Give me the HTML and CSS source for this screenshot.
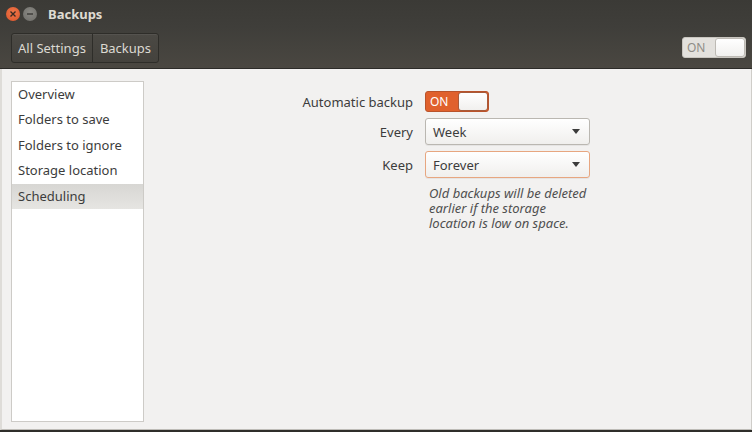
FILE: index.html
```html
<!DOCTYPE html>
<html lang="en">
<head>
	<meta charset="UTF-8">
	<title>Backups</title>
	<link rel="stylesheet" href="styles.css">
</head>
<body>

	<div class="window">
		<div class="titlebar">
			<span class="wbtn close">
				<svg width="8" height="8" viewBox="0 0 8 8"><path d="M1.5 1.5 L6.5 6.5 M6.5 1.5 L1.5 6.5" stroke="#3a2a22" stroke-width="1.4"/></svg>
			</span>
			<span class="wbtn minimize">
				<svg width="8" height="8" viewBox="0 0 8 8"><path d="M1 4 H7" stroke="#3a3936" stroke-width="1.4"/></svg>
			</span>
			<span class="title">Backups</span>
		</div>

		<div class="toolbar">
			<div class="crumbs">
				<span class="crumb">All Settings</span>
				<span class="crumb">Backups</span>
			</div>
			<div class="switch switch-off">
				<span class="switch-label">ON</span>
				<span class="switch-knob"></span>
			</div>
		</div>

		<div class="content">
			<ul class="sidebar">
				<li>Overview</li>
				<li>Folders to save</li>
				<li>Folders to ignore</li>
				<li>Storage location</li>
				<li class="selected">Scheduling</li>
			</ul>

			<div class="form">
				<label>Automatic backup</label>
				<div class="switch switch-on">
					<span class="switch-label">ON</span>
					<span class="switch-knob"></span>
				</div>

				<label>Every</label>
				<div class="combo">Week <span class="arrow"></span></div>

				<label>Keep</label>
				<div class="combo focused">Forever <span class="arrow"></span></div>

				<span></span>
				<p class="hint">Old backups will be deleted earlier if the storage location is low on space.</p>
			</div>
		</div>
	</div>

</body>
</html>
```

FILE: styles.css
```css
body {
	margin: 0;
	width: 752px;
	height: 432px;
	overflow: hidden;
	font-family: "Noto Sans", "Open Sans", sans-serif;
	font-size: 13px;
	background: #2f2e2a;
}

.window {
	display: flex;
	flex-direction: column;
	height: 430px;
}

.titlebar {
	height: 27px;
	display: flex;
	align-items: center;
	padding-left: 6px;
	background: linear-gradient(#3b3a36, #3f3e3a);
}

.wbtn {
	width: 14px;
	height: 14px;
	border-radius: 50%;
	display: flex;
	align-items: center;
	justify-content: center;
	margin-right: 3px;
}

.close {
	background: radial-gradient(circle at 50% 40%, #f0774a, #d9542a);
}

.minimize {
	background: radial-gradient(circle at 50% 40%, #8a8984, #6d6c68);
}

.title {
	color: #dfdbd2;
	font-weight: bold;
	margin-left: 8px;
	font-size: 13px;
}

.toolbar {
	height: 41px;
	display: flex;
	align-items: center;
	justify-content: space-between;
	padding: 0 6px 0 11px;
	background: linear-gradient(#3f3e3a, #4a4741);
	border-bottom: 1px solid #2c2b28;
}

.crumbs {
	display: flex;
	height: 28px;
	border: 1px solid #2e2d29;
	border-radius: 3px;
	background: linear-gradient(#4b4944, #44423d);
	box-shadow: inset 0 1px 0 rgba(255,255,255,0.06);
}

.crumb {
	color: #dcd9d2;
	display: flex;
	align-items: center;
	padding: 0 6px;
}

.crumb + .crumb {
	border-left: 1px solid #2e2d29;
	padding: 0 7px;
}

.switch {
	width: 62px;
	height: 19px;
	border-radius: 3px;
	display: flex;
	overflow: hidden;
	font-size: 12px;
}

.switch-label {
	width: 32px;
	display: flex;
	align-items: center;
	padding-left: 4px;
	box-sizing: border-box;
}

.switch-knob {
	flex: 1;
	background: linear-gradient(#ffffff, #f1f0ee);
	border: 1px solid #bdbab4;
	border-radius: 3px;
}

.switch-off {
	background: #e3e1dd;
	border: 1px solid #c9c6c0;
}

.switch-off .switch-label {
	color: #8f8c86;
}

.switch-on {
	background: #e0612d;
	border: 1px solid #b9532b;
}

.switch-on .switch-label {
	color: #fff;
}

.switch-on .switch-knob {
	border-color: #a85a3a;
}

.content {
	flex: 1;
	display: flex;
	background: #f2f1f0;
	border-left: 2px solid #dedcd8;
	border-right: 1px solid #cfcdc9;
	border-bottom: 1px solid #bebcb7;
	padding: 12px 0 7px 9px;
}

.sidebar {
	list-style: none;
	margin: 0;
	padding: 0;
	width: 131px;
	background: #fff;
	border: 1px solid #cdcbc7;
	color: #3c3c3c;
}

.sidebar li {
	height: 25.4px;
	line-height: 25px;
	padding-left: 6px;
}

.sidebar .selected {
	background: linear-gradient(#d7d6d3, #e6e5e2);
}

.form {
	display: grid;
	grid-template-columns: 124px 165px;
	column-gap: 12px;
	row-gap: 6px;
	align-items: center;
	align-content: start;
	margin: 10px 0 0 145px;
	color: #3c3c3c;
}

.form label {
	text-align: right;
}

.combo {
	height: 25px;
	border: 1px solid #bab7b1;
	border-radius: 3px;
	background: linear-gradient(#ffffff, #f0efed);
	display: flex;
	align-items: center;
	justify-content: space-between;
	padding: 0 7px;
	box-shadow: 0 1px 0 rgba(0,0,0,0.05);
}

.combo.focused {
	border-color: #e7a680;
}

.arrow {
	width: 0;
	height: 0;
	border-left: 4px solid transparent;
	border-right: 4px solid transparent;
	border-top: 5px solid #3c3c3c;
	margin-right: 2px;
}

.hint {
	margin: 2px 0 0 4px;
	font-style: italic;
	font-size: 13px;
	line-height: 15px;
	color: #4f4f4f;
}
```
